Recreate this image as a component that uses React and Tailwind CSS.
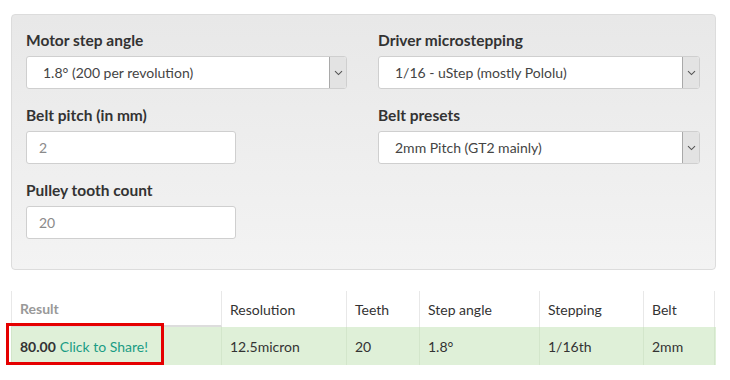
import React from "react";

const font = { fontFamily: "Lato, 'Liberation Sans', sans-serif" };

function Select({ value }) {
  return (
    <div className="flex h-[33px] rounded-[3px] border border-[#cfcfcf] bg-white overflow-hidden">
      <div className="flex-1 flex items-center pl-[16px] text-[14px] text-[#444]">{value}</div>
      <div className="w-[17px] flex items-center justify-center bg-[#e3e3e3] border-l border-[#a9a9a9]">
        <svg width="9" height="6" viewBox="0 0 9 6">
          <path d="M1 1.2 L4.5 4.6 L8 1.2" fill="none" stroke="#555" strokeWidth="1.1" />
        </svg>
      </div>
    </div>
  );
}

function Input({ value, width }) {
  return (
    <div className={`h-[33px] ${width} rounded-[3px] border border-[#cfcfcf] bg-white flex items-center pl-[12px] text-[14px] text-[#8a8a8a]`}>
      {value}
    </div>
  );
}

function Field({ label, children }) {
  return (
    <div className="mb-[16px]">
      <div className="h-[21px] leading-[21px] mb-[5px] text-[15.5px] font-bold text-[#333]">{label}</div>
      {children}
    </div>
  );
}

export default function App() {
  const cells = [
    { w: "w-[125px]", head: "Resolution", val: "12.5micron" },
    { w: "w-[73px]", head: "Teeth", val: "20" },
    { w: "w-[120px]", head: "Step angle", val: "1.8°" },
    { w: "w-[104px]", head: "Stepping", val: "1/16th" },
    { w: "w-[71px]", head: "Belt", val: "2mm" },
  ];

  return (
    <div className="w-[730px] h-[380px] bg-white pt-[14px] px-[11px]" style={font}>
      {/* form panel */}
      <div className="w-[705px] h-[256px] rounded-[4px] border border-[#dcdcdc] bg-gradient-to-b from-[#e8e8e8] to-[#f3f3f3] pt-[15px] pl-[14px] pr-[15px]">
        <div className="flex gap-[31px]">
          <div className="w-[321px]">
            <Field label="Motor step angle">
              <Select value="1.8° (200 per revolution)" />
            </Field>
            <Field label="Belt pitch (in mm)">
              <Input value="2" width="w-[210px]" />
            </Field>
            <Field label="Pulley tooth count">
              <Input value="20" width="w-[210px]" />
            </Field>
          </div>
          <div className="w-[322px]">
            <Field label="Driver microstepping">
              <Select value="1/16 - uStep (mostly Pololu)" />
            </Field>
            <Field label="Belt presets">
              <Select value="2mm Pitch (GT2 mainly)" />
            </Field>
          </div>
        </div>
      </div>

      {/* results table */}
      <div className="mt-[21px] w-[705px] text-[14px]">
        <div className="flex h-[36px]">
          <div className="w-[211px] border-l border-r border-[#e8e8e8] border-b-2 border-b-[#dddddd] flex items-center pl-[8px] font-bold text-[#999]">
            Result
          </div>
          {cells.map((c) => (
            <div key={c.head} className={`${c.w} border-r border-[#e8e8e8] flex items-center pl-[8px] text-[#333]`}>
              {c.head}
            </div>
          ))}
        </div>
        <div className="flex h-[38px] bg-[#dff0d8]">
          <div className="relative w-[211px] border-l border-r border-[#d3e6cb] flex items-center pl-[8px]">
            <span className="font-bold text-[#333]">80.00</span>
            <span className="ml-[4px] text-[#1a9c84]">Click to Share!</span>
            <div className="absolute left-[-6px] top-[-4px] w-[158px] h-[42px] border-[3px] border-[#e50000]"></div>
          </div>
          {cells.map((c) => (
            <div key={c.head} className={`${c.w} border-r border-[#d3e6cb] flex items-center pl-[8px] text-[#333]`}>
              {c.val}
            </div>
          ))}
        </div>
      </div>
    </div>
  );
}
